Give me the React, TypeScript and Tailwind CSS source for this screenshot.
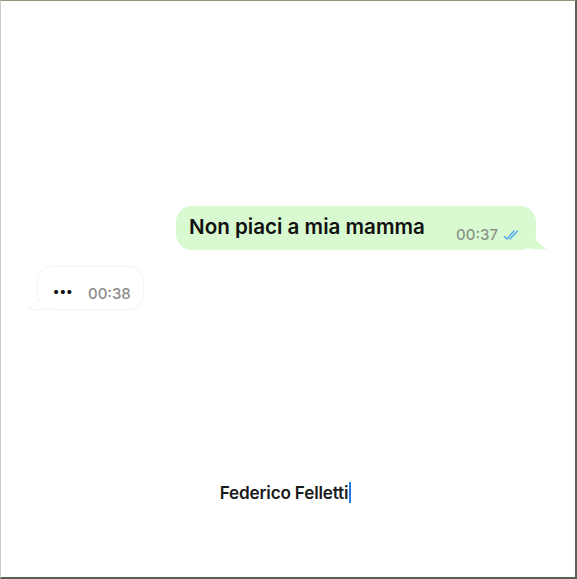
import React from "react";

function DoubleCheck() {
  return (
    <svg width="19" height="12" viewBox="0 0 19 12" fill="none" className="ml-[5px] mb-[1px]">
      <path d="M1.5 7.5 L4 10 L11 2" stroke="#4fa8f0" strokeWidth="1.4" strokeLinecap="round" strokeLinejoin="round" />
      <path d="M7 10 L14.5 2" stroke="#4fa8f0" strokeWidth="1.4" strokeLinecap="round" strokeLinejoin="round" />
    </svg>
  );
}

export default function App() {
  return (
    <div
      className="w-[577px] h-[579px] bg-white border-t border-l border-t-[#8a9a80] border-l-[#c8d0c4] border-r-2 border-b-2 border-r-[#5a6055] border-b-[#5a6055] flex flex-col overflow-hidden"
      style={{ fontFamily: "Inter, 'Noto Sans', sans-serif" }}
    >
      <div className="mt-[205px] self-end mr-[39px] relative">
        <div className="relative z-10 h-[44px] w-[360px] bg-[#d9fad0] rounded-[16px] flex items-center pl-[13px] pr-[14px]">
          <span className="text-[20.6px] font-semibold text-[#111] tracking-[0px] leading-none mb-[1px]">
            Non piaci a mia mamma
          </span>
          <span className="ml-auto flex items-end mt-[12px]">
            <span className="text-[15px] font-medium text-[#8a9588] leading-none">00:37</span>
            <DoubleCheck />
          </span>
        </div>
        <svg className="absolute right-[-12px] bottom-0" width="30" height="20" viewBox="0 0 30 20">
          <path d="M0 0 L14 0 C16 8 21 15 29 19 C20 20 10 19 0 16 Z" fill="#d9fad0" />
        </svg>
      </div>

      <div className="mt-[17px] ml-[37px] self-start relative">
        <div className="relative z-10 h-[42px] w-[105px] bg-white rounded-[14px] flex items-center pl-[15px] pt-[10px] shadow-[0_0_3px_rgba(0,0,0,0.10)]">
          <span className="text-[13px] font-bold text-[#111] leading-none tracking-[0.5px] mb-[3px]">•••</span>
          <span className="ml-[15px] text-[15px] font-medium text-[#8c8c8c] leading-none">00:38</span>
        </div>
        <svg className="absolute left-[-12px] bottom-[-1px] z-20" width="30" height="16" viewBox="0 0 30 16">
          <path d="M30 0 L16 0 C14 6 9 11 1 15 C10 16 20 15.5 30 13 Z" fill="white" />
          <path d="M16 0 C14 6 9 11 1 15 C10 16 20 15.5 28 13.5" fill="none" stroke="rgba(0,0,0,0.05)" strokeWidth="1" />
        </svg>
      </div>

      <div className="mt-[171px] flex justify-center items-center pr-[5px]">
        <span className="text-[17.2px] font-semibold text-[#1a1a1a] tracking-[-0.2px]">Federico Felletti</span>
        <span className="w-[2px] h-[21px] bg-[#2a7ae2] ml-[1px]" />
      </div>
    </div>
  );
}
